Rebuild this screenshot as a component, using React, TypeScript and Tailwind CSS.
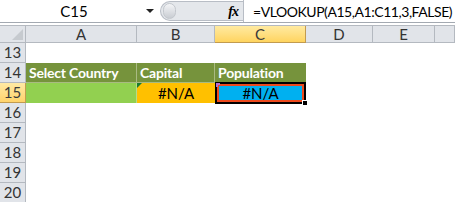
import React from 'react';

const cols = [
  { name: 'A', w: 'w-[111px]' },
  { name: 'B', w: 'w-[78px]' },
  { name: 'C', w: 'w-[91px]' },
  { name: 'D', w: 'w-[67px]' },
  { name: 'E', w: 'w-[62px]' },
  { name: '', w: 'flex-1' },
];

const RowHead: React.FC<{ n: number; active?: boolean }> = ({ n, active }) => (
  <div
    className={`w-[26px] shrink-0 h-full flex items-center justify-center text-[15px] border-r border-b ${
      active
        ? 'bg-gradient-to-b from-[#ffe9a3] to-[#ffd36b] border-[#c29b4f] text-[#3a3a3a]'
        : 'bg-[#e1e4e9] border-[#b4b9c0] text-[#333]'
    }`}
  >
    {n}
  </div>
);

const Triangle: React.FC = () => (
  <div className="absolute left-0 top-0 w-0 h-0 border-t-[5px] border-r-[5px] border-t-[#197b30] border-r-transparent" />
);

const App: React.FC = () => {
  return (
    <div className="w-[455px] h-[202px] overflow-hidden bg-white font-['Lato','Liberation_Sans',sans-serif] text-black">
      {/* Barra de fórmulas */}
      <div className="flex h-[23px] border-b border-[#a3a9b1]">
        <div className="w-[160px] shrink-0 flex items-center">
          <div className="flex-1 text-center text-[15px] pl-[2px]">C15</div>
          <div className="w-0 h-0 mr-[6px] border-l-[4px] border-r-[4px] border-t-[4px] border-l-transparent border-r-transparent border-t-[#222]" />
        </div>
        <div className="w-[83px] shrink-0 my-[1px] flex items-center justify-between rounded-l-full border border-r-0 border-[#b8bdc5] bg-[#e4e7eb]">
          <div className="ml-[2px] w-[13px] h-[16px] rounded-full bg-gradient-to-b from-[#f4f5f7] to-[#c9cdd3] border border-[#c3c7cd]" />
          <span className="mr-[5px] text-[14px] italic font-['Liberation_Serif',serif] font-bold tracking-[-1px]">fx</span>
        </div>
        <div className="flex-1 border-l border-[#b8bdc5] flex items-center pl-[9px] text-[14px] tracking-[-0.45px] whitespace-nowrap">
          =VLOOKUP(A15,A1:C11,3,FALSE)
        </div>
      </div>
      <div className="h-[2px]" />
      <div className="h-[1px] bg-[#b4b9c0]" />

      {/* Encabezados de columna */}
      <div className="flex h-[17px]">
        <div className="w-[26px] shrink-0 bg-[#e1e4e9] border-r border-b border-[#b4b9c0] relative overflow-hidden">
          <div className="absolute right-[2px] bottom-[2px] w-0 h-0 border-b-[11px] border-l-[11px] border-b-[#c6cacf] border-l-transparent" />
        </div>
        {cols.map((c) => (
          <div
            key={c.name || 'f'}
            className={`${c.w} shrink-0 h-full flex items-center justify-center text-[15px] border-r border-b ${
              c.name === 'C'
                ? 'bg-gradient-to-b from-[#ffeaa0] to-[#ffd45e] border-[#c29b4f] text-[#3a3a3a]'
                : 'bg-[#e1e4e9] border-[#b4b9c0] text-[#333]'
            }`}
          >
            {c.name}
          </div>
        ))}
      </div>

      {/* Fila 13 */}
      <div className="flex h-[20px]">
        <RowHead n={13} />
      </div>

      {/* Fila 14 */}
      <div className="flex h-[20px]">
        <RowHead n={14} />
        <div className="w-[111px] shrink-0 bg-[#76933c] border-r border-b border-[#a9ba82] text-white font-bold text-[14px] tracking-[-0.2px] pl-[3px] flex items-center whitespace-nowrap">
          Select Country
        </div>
        <div className="w-[78px] shrink-0 bg-[#76933c] border-r border-b border-[#a9ba82] text-white font-bold text-[14px] tracking-[-0.2px] pl-[3px] flex items-center">
          Capital
        </div>
        <div className="w-[91px] shrink-0 bg-[#76933c] border-b border-[#a9ba82] text-white font-bold text-[14px] tracking-[-0.2px] pl-[3px] flex items-center">
          Population
        </div>
      </div>

      {/* Fila 15 */}
      <div className="flex h-[20px]">
        <RowHead n={15} active />
        <div className="w-[111px] shrink-0 bg-[#92d050] border-r border-[#b5dc8a]" />
        <div className="w-[78px] shrink-0 bg-[#ffc000] relative flex items-center justify-center text-[15px]">
          <Triangle />
          #N/A
        </div>
        <div className="w-[91px] shrink-0 relative border-2 border-black -mt-[1px] h-[22px]">
          <div className="h-full bg-[#00b0f0] border-2 border-[#ee4a1d] flex items-center justify-center text-[15px]">
            #N/A
          </div>
          <div className="absolute -left-[1px] -top-[1px] w-[4px] h-[4px] border-l-2 border-t-2 border-[#b36bd6]" />
          <div className="absolute -right-[4px] -bottom-[4px] w-[6px] h-[6px] bg-black border border-white" />
        </div>
      </div>

      {[16, 17, 18, 19, 20].map((n) => (
        <div key={n} className="flex h-[20px]">
          <RowHead n={n} />
        </div>
      ))}
    </div>
  );
};

export default App;
